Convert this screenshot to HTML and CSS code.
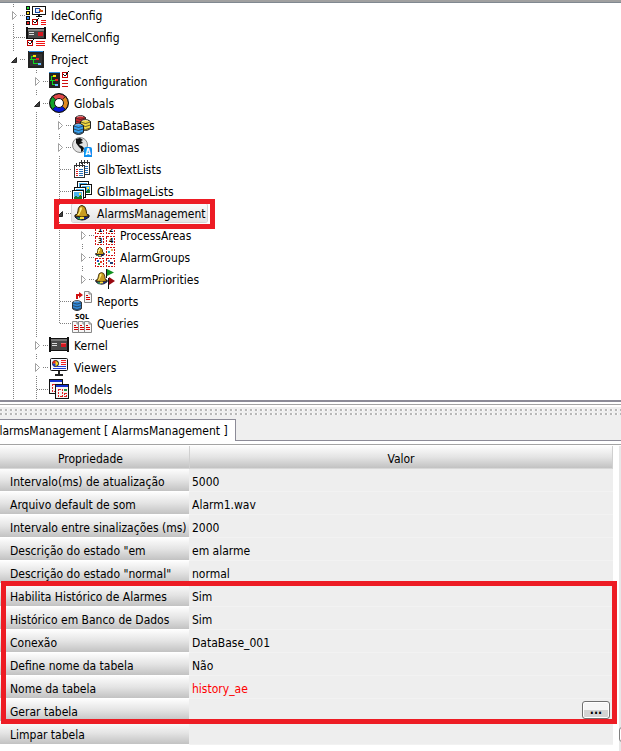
FILE: index.html
```
<!DOCTYPE html>
<html lang="pt-BR">
<head>
  <meta charset="UTF-8" />
  <meta name="viewport" content="width=device-width, initial-scale=1.0"/>
  <title>AlarmsManagement</title>
  <link rel="stylesheet" href="styles.css">
</head>
<body>

<!-- Shared symbols -->
<svg class="defs" width="0" height="0" aria-hidden="true">
  <symbol id="closed" viewBox="0 0 10 10"><path d="M4.500 1.500L8.500 5.500L4.500 9.500z" fill="#fff" stroke="#a0a0a0"/></symbol>
  <symbol id="open" viewBox="0 0 10 10"><path d="M8.500 3.500V8.500H3.500z" fill="#404040" stroke="#262626"/></symbol>
  <symbol id="checks" viewBox="0 0 7 7">
    <path d="M.5 1.500H5.500V6.500H.5z" fill="#fff" stroke="#c00000"/>
    <path d="M1.500 3.500L3 5L6.500 .5" fill="none" stroke="#111"/>
  </symbol>
  <symbol id="rack" viewBox="0 0 20 15">
    <path d="M0 0H2V1H18V0H20V15H18V14H2V15H0z" fill="#111"/>
    <path d="M2 2H18V13H2z" fill="#484848"/><path d="M2 2H18V4H2z" fill="#777"/>
    <path d="M3 6H8V7H3zM3 8H8V9H3z" fill="#ddd"/><path d="M12 6H17V10H12z" fill="#d41820"/><path d="M12 6H17V7H12z" fill="#f06060"/>
  </symbol>
  <symbol id="board" viewBox="0 0 16 17">
    <rect width="16" height="17" rx="1" fill="#222"/><path d="M1 0H15V1H1z" fill="#2d8de0"/><path d="M2 3H14V15H2z" fill="#333"/>
    <path d="M5 5.500H3.500V8.500H2M4 8.500H8M5.500 9V12.500H10" fill="none" stroke="#10d820"/>
    <path d="M5 4H8V6H5z" fill="#ffe000"/><path d="M8 7H11V9H8z" fill="#f02020"/><path d="M10 12H13V14H10z" fill="#68b8ff"/>
  </symbol>
  <symbol id="bell" viewBox="0 0 16 16">
    <path d="M1 10Q8 7 15 10V12Q11 15.500 8 15Q3 15 1 12z" fill="#182890" stroke="#111"/>
    <path d="M3 12L6 13L8 15L4 14z" fill="#28a050"/>
    <path d="M8 .5Q4 1 4 6Q4 9 1 11Q8 13 14.500 11Q12 9 12 5Q11.500 1 8 .5z" fill="#c89c20" stroke="#332400"/>
    <path d="M6 3Q8 1 8 4Q6 8 5 10L3.500 10Q6 7 6 3z" fill="#fff080"/>
    <path d="M6 12H10V14H6z" fill="#ffe040"/>
  </symbol>
  <symbol id="cylinder" viewBox="0 0 11 12">
    <path d="M.5 2.500Q5.500-1.500 10.500 2.500V9.500Q5.500 13.500 .5 9.500z" stroke="#222"/>
    <path d="M.5 3Q5.500 6 10.500 3M.5 6Q5.500 9 10.500 6M1 9Q5.500 12 10 9" fill="none" stroke="#222" stroke-opacity=".65"/>
    <path d="M2 2Q5 .5 8 1.500" fill="none" stroke="#fff" stroke-opacity=".5"/>
  </symbol>
  <symbol id="page" viewBox="0 0 8 12">
    <path d="M.5 .5H5L7.500 3V11.500H.5z" fill="#f6f6f6" stroke="#888"/>
    <path d="M5 .5V3H7.500" fill="none" stroke="#888"/>
    <path d="M2 4H4V5H2zM2 6H6V7H2zM2 8H6V9H2z" fill="#d00000"/>
  </symbol>
  <symbol id="photo" viewBox="0 0 12 11">
    <path d="M.5 .5H11.500V10.500H.5z" fill="#fff" stroke="#111"/><path d="M2 2H10V9H2z" fill="#4cb4f0"/>
    <path d="M2 9V7L4 6L6 7L8 5L10 7V9z" fill="#187830"/><path d="M7 3H9V5H7z" fill="#ffe040"/>
  </symbol>
  <symbol id="notes" viewBox="0 0 11 15">
    <path d="M.5 2.500H10.500V14.500H.5z" fill="#fff" stroke="#333"/>
    <path d="M2.500 0V4M5.500 0V4M8.500 0V4" stroke="#333"/>
    <path d="M2 6H4V7H2zM2 8H4V9H2zM2 10H4V11H2zM2 12H4V13H2z" fill="#e02020"/>
    <path d="M5 6H9V7H5zM5 8H9V9H5zM5 10H9V11H5zM5 12H9V13H5z" fill="#2870b8"/>
  </symbol>
  <symbol id="tile" viewBox="0 0 9 9"><path d="M.5 .5H8.500V8.500H.5z" fill="#fff" stroke="#d01010" stroke-dasharray="2 1"/></symbol>
  <symbol id="window" viewBox="0 0 14 15">
    <path d="M.5 .5H13.500V14.500H.5z" fill="#f4f4f4" stroke="#111"/><path d="M1 1H13V3H1z" fill="#1030d0"/>
    <path d="M3.500 5.500H7.500V12.500H3.500z" fill="none" stroke="#e02020" stroke-dasharray="2 1"/>
    <path d="M9 5H12V7H9z" fill="#209040"/><path d="M9.500 9.500H11.500V12.500H9.500z" fill="none" stroke="#e02020" stroke-dasharray="2 1"/>
  </symbol>
</svg>

<main>
  <!-- Project tree -->
  <nav class="tree" aria-label="Project">
    <ul>
      <li>
        <div class="row"><button class="toggle" aria-label="Expand IdeConfig"><svg><use href="#closed"/></svg></button>
          <svg class="icon crisp" viewBox="0 0 20 20">
            <path d="M0 1H4V5H0zM0 6H4V10H0zM0 11H4V15H0zM0 16H4V20H0z" fill="#111"/>
            <path d="M1 2H3V4H1z" fill="#20e030"/><path d="M1 7H3V9H1z" fill="#ffe020"/><path d="M1 12H3V14H1z" fill="#3090ff"/><path d="M1 17H3V19H1z" fill="#f02020"/>
            <path d="M6.500 1.500H19.500V9.500H6.500z" fill="#fff" stroke="#111"/><path d="M12 10H14V11H16V12H10V11H12z" fill="#111"/>
            <path d="M9.500 3.500H13.500V7.500H9.500z" fill="#dceaff" stroke="#1848a0"/><path d="M13 4H15V5H17V7H14V6H13z" fill="#d05010"/>
            <use href="#checks" x="6" y="13" width="7" height="7"/><path d="M15 15H20V16H15zM15 17H20V18H15zM15 19H20V20H15z" fill="#f01010"/>
          </svg><a href="#ideconfig">IdeConfig</a></div>
      </li>
      <li>
        <div class="row"><span class="stub"></span>
          <svg class="icon crisp" viewBox="0 0 20 20">
            <path d="M0 0H2V1H18V0H20V12H0z" fill="#111"/><path d="M2 2H18V11H2z" fill="#484848"/><path d="M2 2H18V4H2z" fill="#858585"/>
            <path d="M3 5H8V6H3zM3 7H8V8H3z" fill="#ddd"/><path d="M12 5H17V9H12z" fill="#d41820"/>
            <use href="#checks" x="1" y="12" width="7" height="7"/><path d="M10 14H19V15H10zM10 16H19V17H10zM10 18H19V19H10z" fill="#f01010"/>
          </svg><a href="#kernelconfig">KernelConfig</a></div>
      </li>
      <li>
        <div class="row"><button class="toggle" aria-label="Collapse Project"><svg><use href="#open"/></svg></button>
          <svg class="icon crisp" viewBox="0 0 20 20"><use href="#board" x="2" y="2" width="16" height="17"/></svg><a href="#project">Project</a></div>
        <ul>
          <li>
            <div class="row"><button class="toggle" aria-label="Expand Configuration"><svg><use href="#closed"/></svg></button>
              <svg class="icon crisp" viewBox="0 0 20 20">
                <path d="M0 1H11V17H0z" fill="#222"/><path d="M0 1H11V2H0z" fill="#2d8de0"/>
                <path d="M4 5.500H2.500V9.500H1M3 9.500H6M3.500 9V13.500H6" fill="none" stroke="#10d820"/>
                <path d="M4 4H7V6H4z" fill="#ffe000"/><path d="M6 8H9V10H6z" fill="#f02020"/><path d="M6 13H9V15H6z" fill="#68b8ff"/>
                <use href="#checks" x="13" y="0" width="7" height="7"/><path d="M13 9H19V10H13zM13 12H19V13H13zM13 15H19V16H13z" fill="#d01010"/>
              </svg><a href="#configuration">Configuration</a></div>
          </li>
          <li>
            <div class="row"><button class="toggle" aria-label="Collapse Globals"><svg><use href="#open"/></svg></button>
              <svg class="icon" viewBox="0 0 20 20">
                <circle cx="10" cy="10" r="9.500" fill="#111"/>
                <path d="M10 10L4 3.500Q10-1.500 16 3.500z" fill="#e04848"/><path d="M10 10L16.500 4Q21.500 10 16.500 16z" fill="#e08a20"/>
                <path d="M10 10L16 16.500Q10 21.500 4 16.500z" fill="#0818d8"/><path d="M10 10L3.500 16Q-1.500 10 3.500 4z" fill="#10a028"/>
                <circle cx="10" cy="10" r="9.500" fill="none" stroke="#111"/>
                <circle cx="10" cy="10" r="4.500" fill="#fff" stroke="#111"/>
              </svg><a href="#globals">Globals</a></div>
            <ul class="ends">
              <li>
                <div class="row"><button class="toggle" aria-label="Expand DataBases"><svg><use href="#closed"/></svg></button>
                  <svg class="icon" viewBox="0 0 20 20">
                    <use href="#cylinder" x="3" y="0" width="11" height="12" fill="#c82830"/>
                    <use href="#cylinder" x="8" y="4" width="11" height="12" fill="#f0d840"/>
                    <use href="#cylinder" x="1" y="8" width="11" height="12" fill="#38a0f0"/>
                  </svg><a href="#databases">DataBases</a></div>
              </li>
              <li>
                <div class="row"><button class="toggle" aria-label="Expand Idiomas"><svg><use href="#closed"/></svg></button>
                  <svg class="icon" viewBox="0 0 20 20">
                    <circle cx="8" cy="8" r="7.500" fill="#e4e4e4" stroke="#888"/>
                    <path d="M4 2L8 1L11 3L9 4L11 6L8 7L7 8L10 9L12 11L11 14L9 15L9 12L7 10L4 6z" fill="#111"/>
                    <path d="M12 12Q12 10 14 10H18Q20 10 20 12V20H12z" fill="#1090f0"/>
                    <text class="badge" x="16" y="18" text-anchor="middle">A</text>
                  </svg><a href="#idiomas">Idiomas</a></div>
              </li>
              <li>
                <div class="row"><span class="stub"></span>
                  <svg class="icon crisp" viewBox="0 0 20 20"><use href="#notes" x="7" y="1" width="11" height="15"/><use href="#notes" x="2" y="4" width="11" height="15"/></svg><a href="#glbtextlists">GlbTextLists</a></div>
              </li>
              <li>
                <div class="row"><span class="stub"></span>
                  <svg class="icon crisp" viewBox="0 0 20 20"><use href="#photo" x="5" y="0" width="12" height="11"/><use href="#photo" x="8" y="3" width="12" height="11"/><use href="#photo" x="2" y="6" width="12" height="11"/><use href="#photo" x="0" y="9" width="12" height="11"/></svg><a href="#glbimagelists">GlbImageLists</a></div>
              </li>
              <li>
                <div class="row selected"><button class="toggle" aria-label="Collapse AlarmsManagement"><svg><use href="#open"/></svg></button>
                  <span class="current"><svg class="icon" viewBox="0 0 20 20"><use href="#bell" x="2" y="2" width="16" height="16"/></svg><a href="#alarmsmanagement">AlarmsManagement</a></span></div>
                <ul class="ends">
                  <li>
                    <div class="row"><button class="toggle" aria-label="Expand ProcessAreas"><svg><use href="#closed"/></svg></button>
                      <svg class="icon crisp" viewBox="0 0 20 20">
                        <use href="#tile" x="0" y="0" width="9" height="9"/><use href="#tile" x="11" y="0" width="9" height="9"/>
                        <use href="#tile" x="0" y="11" width="9" height="9"/><use href="#tile" x="11" y="11" width="9" height="9"/>
                        <g class="digits"><text x="3" y="7">1</text><text x="14" y="7">2</text><text x="3" y="18">3</text><text x="14" y="18">4</text></g>
                      </svg><a href="#processareas">ProcessAreas</a></div>
                  </li>
                  <li>
                    <div class="row"><button class="toggle" aria-label="Expand AlarmGroups"><svg><use href="#closed"/></svg></button>
                      <svg class="icon crisp" viewBox="0 0 20 20">
                        <use href="#bell" x="0" y="0" width="10" height="10"/><use href="#tile" x="11" y="0" width="9" height="9"/>
                        <use href="#tile" x="0" y="11" width="9" height="9"/><use href="#tile" x="11" y="11" width="9" height="9"/>
                        <path d="M13 4H15V6H13z" fill="#20b0c0"/><path d="M16 2H18V4H16z" fill="#e0b060"/>
                        <path d="M2 13H4V15H2z" fill="#2050c0"/><path d="M5 14H7V16H5z" fill="#e04020"/><path d="M3 16H5V18H3z" fill="#30a040"/>
                        <path d="M13 13H15V15H13z" fill="#6088c0"/><path d="M15 15H18V17H15z" fill="#203870"/>
                      </svg><a href="#alarmgroups">AlarmGroups</a></div>
                  </li>
                  <li>
                    <div class="row"><button class="toggle" aria-label="Expand AlarmPriorities"><svg><use href="#closed"/></svg></button>
                      <svg class="icon" viewBox="0 0 20 20">
                        <use href="#bell" x="0" y="3" width="13" height="13"/>
                        <path d="M11.500 0V9M13.500 9V20" stroke="#111"/><path d="M12 0L19 3.500L12 7z" fill="#109020"/><path d="M14 8L20 12L14 16z" fill="#980810"/>
                      </svg><a href="#alarmpriorities">AlarmPriorities</a></div>
                  </li>
                </ul>
              </li>
              <li>
                <div class="row"><span class="stub"></span>
                  <svg class="icon" viewBox="0 0 20 20">
                    <use href="#cylinder" x="0" y="9" width="10" height="11" fill="#3088d8"/>
                    <path d="M4 8V3H7V1L11 4L7 7V5H6V8z" fill="#d01010"/><use href="#page" x="12" y="0" width="8" height="12"/>
                  </svg><a href="#reports">Reports</a></div>
              </li>
              <li>
                <div class="row"><span class="stub"></span>
                  <svg class="icon" viewBox="0 0 20 20">
                    <text class="sql" x="10" y="6" text-anchor="middle">SQL</text>
                    <use href="#page" x="0" y="8" width="8" height="12"/><use href="#page" x="6" y="8" width="8" height="12"/><use href="#page" x="12" y="8" width="8" height="12"/>
                  </svg><a href="#queries">Queries</a></div>
              </li>
            </ul>
          </li>
          <li>
            <div class="row"><button class="toggle" aria-label="Expand Kernel"><svg><use href="#closed"/></svg></button>
              <svg class="icon crisp" viewBox="0 0 20 20"><use href="#rack" x="0" y="2" width="20" height="15"/></svg><a href="#kernel">Kernel</a></div>
          </li>
          <li>
            <div class="row"><button class="toggle" aria-label="Expand Viewers"><svg><use href="#closed"/></svg></button>
              <svg class="icon" viewBox="0 0 20 20">
                <rect x="1.500" y="1.500" width="17" height="12" rx="1" fill="#f6f8ff" stroke="#111"/>
                <path d="M9 14H11V17H14V19H6V17H9z" fill="#222"/>
                <circle cx="6.500" cy="6.500" r="3" fill="#ffd820" stroke="#111"/><path d="M6.500 6.500V3.500A3 3 0 0 0 3.500 6.500z" fill="#e02020"/><path d="M6.500 6.500H3.500A3 3 0 0 0 6.500 9.500z" fill="#1838d0"/>
                <path d="M12 3.500H17M12 5.500H17M12 7.500H17" stroke="#f02020"/><path d="M8 9.500H17M4 11.500H17" stroke="#2040d0"/>
              </svg><a href="#viewers">Viewers</a></div>
          </li>
          <li>
            <div class="row"><span class="stub"></span>
              <svg class="icon crisp" viewBox="0 0 20 20"><use href="#window" x="0" y="0" width="14" height="15"/><use href="#window" x="6" y="5" width="14" height="15"/></svg><a href="#models">Models</a></div>
          </li>
        </ul>
      </li>
    </ul>
  </nav>

  <div class="splitter"></div>

  <div class="tabs">
    <button class="tab">AlarmsManagement [ AlarmsManagement ]</button>
  </div>

  <!-- Properties of the selected node -->
  <section class="properties">
    <table>
      <thead>
        <tr><th scope="col">Propriedade</th><th scope="col">Valor</th></tr>
      </thead>
      <tbody>
        <tr><th scope="row">Intervalo(ms) de atualização</th><td>5000</td></tr>
        <tr><th scope="row">Arquivo default de som</th><td>Alarm1.wav</td></tr>
        <tr><th scope="row">Intervalo entre sinalizações (ms)</th><td>2000</td></tr>
        <tr><th scope="row">Descrição do estado "em</th><td>em alarme</td></tr>
        <tr><th scope="row">Descrição do estado "normal"</th><td>normal</td></tr>
      </tbody>
      <tbody class="history">
        <tr><th scope="row">Habilita Histórico de Alarmes</th><td>Sim</td></tr>
        <tr><th scope="row">Histórico em Banco de Dados</th><td>Sim</td></tr>
        <tr><th scope="row">Conexão</th><td>DataBase_001</td></tr>
        <tr><th scope="row">Define nome da tabela</th><td>Não</td></tr>
        <tr><th scope="row">Nome da tabela</th><td class="changed">history_ae</td></tr>
        <tr><th scope="row">Gerar tabela</th><td><button class="browse" aria-label="Gerar tabela">...</button></td></tr>
      </tbody>
      <tbody>
        <tr><th scope="row">Limpar tabela</th><td></td></tr>
      </tbody>
    </table>
  </section>
</main>

</body>
</html>
```
FILE: styles.css
```
/* Basic reset */
*, *::before, *::after { margin: 0; padding: 0; box-sizing: border-box; }
body { font-family: "DejaVu Sans Condensed", "DejaVu Sans", Tahoma, sans-serif; font-size: 12px; line-height: 16px; background: #fff; color: #000; overflow: hidden; }
a { color: inherit; text-decoration: none; }
button { font: inherit; color: inherit; }
.defs { position: absolute; }
main { display: flex; flex-direction: column; min-height: 100vh; border-top: 2px solid #a0a0a0; }

/* Tree */
.tree { border-top: 1px solid #808890; border-bottom: 2px solid #8c8b97; padding-top: 1px; }
.tree ul { list-style: none; }
.tree ul ul { margin-left: 23px; }
.tree li { background: repeating-linear-gradient(#808080 0 1px, #fff 1px 2px) 13px 0 / 1px 100% no-repeat; }
.tree .ends > li:last-child { background-size: 1px 11px; }
.row { display: flex; align-items: center; height: 22px; padding-left: 8px; white-space: nowrap; }
.row a { margin-left: 5px; padding-top: 2px; }
.toggle { display: flex; align-items: center; width: 18px; height: 16px; border: none; background: repeating-linear-gradient(90deg, #808080 0 1px, #fff 1px 2px) 12px 8px / 6px 1px no-repeat #fff; cursor: pointer; }
.toggle svg { width: 10px; height: 10px; }
.stub { width: 12px; height: 1px; margin-left: 6px; background: repeating-linear-gradient(90deg, #808080 0 1px, #fff 1px 2px); }
.icon { flex: none; width: 20px; height: 20px; }
.crisp { shape-rendering: crispEdges; }
.badge { font-size: 8px; font-weight: bold; fill: #fff; }
.digits { font-size: 7px; font-weight: bold; }
.sql { font-size: 7px; font-weight: bold; }

/* Selected node with its marker frame */
.selected { position: relative; }
.selected::after { content: ""; position: absolute; top: -3px; left: 8px; width: 161px; height: 30px; border: 5px solid #ed1c24; pointer-events: none; }
.current { display: flex; align-items: center; height: 18px; padding-right: 1px; border-radius: 2px; background: linear-gradient(#fafafa, #e4e4e4); box-shadow: 0 0 0 1px #d4d4d4; }

/* Splitter and tab strip */
.splitter {
  height: 17px;
  border-top: 2px solid #fff;
  background:
    repeating-linear-gradient(90deg, #b8b8b8 0 2px, #fafafa 2px 3px, #efefef 3px 5px) 0 5px / 100% 2px no-repeat,
    repeating-linear-gradient(90deg, #b8b8b8 0 2px, #fafafa 2px 3px, #efefef 3px 5px) 0 9px / 100% 2px no-repeat,
    linear-gradient(#a4a4a4 0 1px, #fff 1px 3px, #efefef 3px);
}
.tabs { display: flex; height: 22px; background: #efefef; border-bottom: 1px solid #8c8b97; }
.tab { height: 22px; margin-left: -13px; padding: 0 7px 0 4px; border: 1px solid #8c8b97; border-bottom: none; background: #fff; white-space: nowrap; }

/* Property table */
.properties { flex: 1; position: relative; margin-top: 3px; padding: 1px 8px 0 0; border-top: 1px solid #a4a4a4; background: linear-gradient(#e8e8e8, #e8e8e8) right 1px / 2px 100% no-repeat; }
.properties::after { content: ""; position: absolute; right: -4px; bottom: 9px; width: 6px; height: 15px; border: 1px solid #808080; border-radius: 3px; background: #fff; }
table { width: 100%; border-collapse: separate; border-spacing: 0; table-layout: fixed; }
th, td { height: 23px; padding-top: 3px; font-weight: normal; white-space: nowrap; overflow: hidden; }
th { background: linear-gradient(#fdfdfd, #e4e4e4 50%, #c2c2c2); }
thead th { border-right: 1px solid #d0d0d0; border-bottom: 1px solid #d8d8d8; }
thead th:first-child { width: 190px; padding-right: 8px; }
tbody th { padding-left: 10px; text-align: left; border-right: 1px solid #eee; border-bottom: 1px solid #fff; }
tbody td { position: relative; padding-left: 2px; background: #eee; border-bottom: 1px solid #f2f2f2; }
.changed { color: #f00; }
.browse { position: absolute; top: 2px; right: 3px; width: 28px; height: 18px; border: 1px solid #707070; border-radius: 3px; background: linear-gradient(#f6f6f6 50%, #d4d4d4 50%); box-shadow: inset 0 0 0 1px #fff; font-weight: bold; line-height: 14px; cursor: pointer; }

/* Marker frame around the history settings */
.history { position: relative; z-index: 1; }
.history::after { content: ""; position: absolute; top: -3px; right: -4px; bottom: -2px; left: 1px; border: 5px solid #ed1c24; pointer-events: none; }
```
